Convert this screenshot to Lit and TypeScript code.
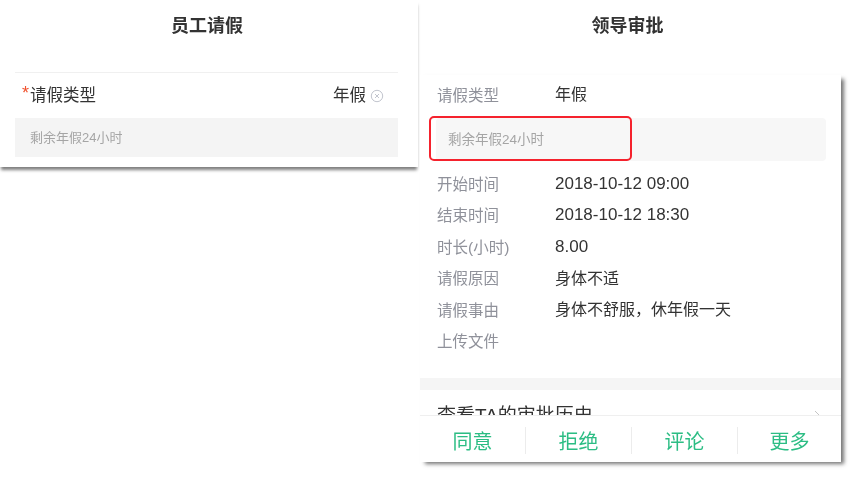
import { LitElement, html, css } from "lit";
import { customElement } from "lit/decorators.js";

const rows: [string, string, boolean][] = [
  ["开始时间", "2018-10-12 09:00", true],
  ["结束时间", "2018-10-12 18:30", true],
  ["时长(小时)", "8.00", true],
  ["请假原因", "身体不适", false],
  ["请假事由", "身体不舒服，休年假一天", false],
  ["上传文件", "", false],
];

@customElement("app-root")
export class AppRoot extends LitElement {
  static styles = css`
    :host {
      display: block;
      width: 859px;
      height: 479px;
      overflow: hidden;
      background: #fff;
      font-family: "Liberation Sans", "Noto Sans CJK SC", sans-serif;
    }
    .page {
      display: flex;
      width: 859px;
      height: 479px;
      filter: blur(0.4px);
    }
    .left {
      width: 418px;
      height: 167px;
      flex: none;
      box-shadow: 0 4px 3px -1px rgba(0, 0, 0, 0.5);
      padding: 0 20px 0 15px;
      box-sizing: border-box;
      background: #fff;
    }
    .title {
      font-size: 18px;
      font-weight: 700;
      color: #333;
      line-height: 24px;
      text-align: center;
    }
    .left .title {
      padding-top: 14px;
      height: 58px;
      box-sizing: border-box;
      margin: 0 -20px 0 -15px;
      padding-right: 4px;
    }
    .left-body {
      margin-top: 14px;
      border-top: 1px solid #f0f0f0;
    }
    .type {
      display: flex;
      align-items: center;
      height: 45px;
      padding: 0 14px 3px 7px;
      box-sizing: border-box;
      font-size: 16.5px;
      color: #333;
    }
    .star {
      color: #f0512d;
      font-size: 18px;
      width: 8px;
      line-height: 18px;
      margin-top: -3px;
    }
    .type .grow { flex: 1; }
    .close { margin: 3px 0 0 4px; display: block; }
    .note {
      background: #f4f4f4;
      height: 39px;
      display: flex;
      align-items: center;
      padding: 0 0 3px 15px;
      box-sizing: border-box;
      font-size: 13px;
      color: #a5a5a5;
    }
    .rightcol {
      flex: none;
      width: 421px;
      margin-left: 2px;
      display: flex;
      flex-direction: column;
    }
    .rightcol .title {
      padding-top: 14px;
      height: 75px;
      box-sizing: border-box;
      padding-right: 6px;
    }
    .panel {
      position: relative;
      height: 387px;
      box-shadow: 4px 3px 4px -1px rgba(0, 0, 0, 0.55);
      background: #fff;
      display: flex;
      flex-direction: column;
    }
    .details { padding: 4px 15px 0 17px; }
    .row {
      display: flex;
      align-items: center;
      height: 31.5px;
      font-size: 15.5px;
    }
    .label { width: 118px; color: #8f919a; flex: none; margin-top: -2px; }
    .val { color: #333; font-size: 16px; margin-top: -3px; }
    .val.num { font-size: 17px; margin-top: 0; }
    .note2 {
      background: #f7f7f7;
      border-radius: 4px;
      height: 43px;
      margin: 7px 0 7.5px -1px;
      display: flex;
      align-items: center;
      padding: 0 0 2px 12px;
      box-sizing: border-box;
      font-size: 13.5px;
      color: #a5a5a5;
    }
    .mark {
      position: absolute;
      left: 9px;
      top: 41px;
      width: 203px;
      height: 45px;
      border: 2px solid #f5222d;
      border-radius: 5px;
      box-sizing: border-box;
    }
    .band {
      background: #f5f5f5;
      height: 12px;
      margin-top: 20.5px;
      flex: none;
    }
    .history {
      height: 25px;
      overflow: hidden;
      flex: none;
      display: flex;
      justify-content: space-between;
      padding: 14px 19px 0 17px;
      box-sizing: border-box;
      font-size: 19px;
      line-height: 24px;
      color: #333;
    }
    .chev { display: block; margin-top: 6px; }
    .actions {
      flex: 1;
      display: grid;
      grid-template-columns: 105px 106px 106px 1fr;
      align-items: start;
      border-top: 1px solid #efefef;
      padding-top: 11px;
    }
    .actions div {
      height: 27px;
      line-height: 31px;
      text-align: center;
      font-size: 20px;
      color: #2cbd84;
      border-left: 1px solid #ececec;
    }
    .actions div:first-child { border-left: none; }
  `;

  render() {
    return html`
      <div class="page">
        <section class="left">
          <div class="title">员工请假</div>
          <div class="left-body">
            <div class="type">
              <span class="star">*</span><span class="grow">请假类型</span><span>年假</span>
              <svg class="close" width="14" height="14" viewBox="0 0 14 14" fill="none" stroke="#c2c5ce">
                <circle cx="7" cy="7" r="5.7" />
                <path d="M5 5l4 4M9 5l-4 4" />
              </svg>
            </div>
            <div class="note">剩余年假24小时</div>
          </div>
        </section>
        <section class="rightcol">
          <div class="title">领导审批</div>
          <div class="panel">
            <div class="details">
              <div class="row"><span class="label">请假类型</span><span class="val">年假</span></div>
              <div class="note2">剩余年假24小时</div>
              ${rows.map(
                ([l, v, n]) => html`<div class="row"><span class="label">${l}</span><span class="val ${n ? "num" : ""}">${v}</span></div>`
              )}
            </div>
            <div class="band"></div>
            <div class="history">
              <span>查看TA的审批历史</span>
              <svg class="chev" width="8" height="14" viewBox="0 0 8 14" fill="none" stroke="#c5c5c5"><path d="M1 1l6 6-6 6" /></svg>
            </div>
            <div class="actions">
              <div>同意</div><div>拒绝</div><div>评论</div><div>更多</div>
            </div>
            <div class="mark"></div>
          </div>
        </section>
      </div>
    `;
  }
}
